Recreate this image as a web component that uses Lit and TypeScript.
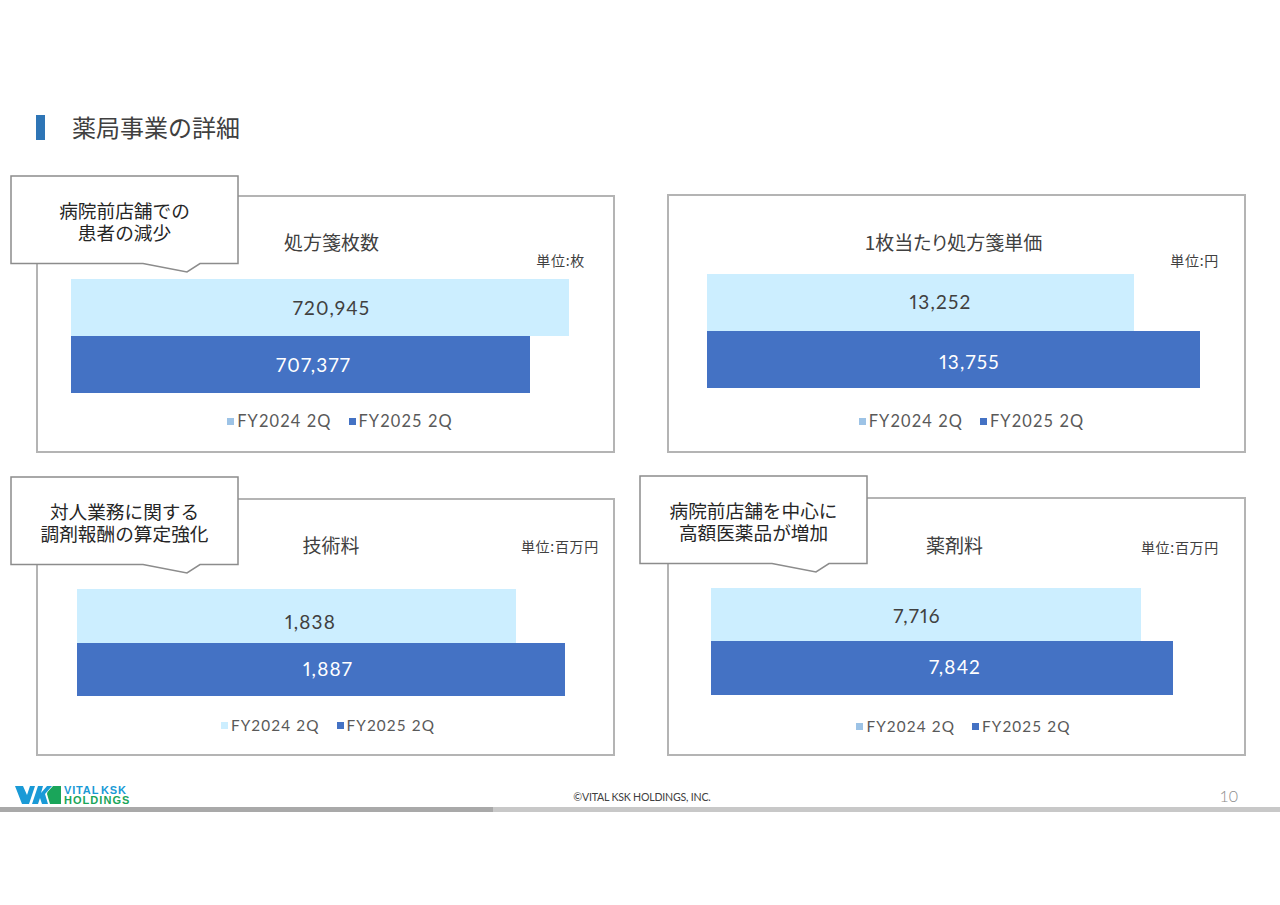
import { LitElement, html, css } from "lit";
import { customElement } from "lit/decorators.js";

interface Bar { v: string; w: number; dx: number; dy?: number; }
interface Panel {
  title: string; unit: string; left: number; h: number; top: number;
  titleDx: number; titleTop: number; unitTop: number; unitRight: number; legendDx: number; legendTop: number; legendSize: number; h2: number;
  a: Bar; b: Bar; pale?: boolean;
  call?: { l: string[]; top: number; left: number; };
  height: number;
}

const panels: Panel[] = [
  { title: "処方箋枚数", unit: "単位:枚", left: 33, top: 82, h: 57, h2: 57, titleDx: 6, titleTop: 33, unitTop: 55, unitRight: 28, legendDx: 14.5, legendTop: 18, legendSize: 16.4, height: 258,
    a: { v: "720,945", w: 498, dx: 11.5 }, b: { v: "707,377", w: 459, dx: 13 }, call: { l: ["病院前店舗での", "患者の減少"], top: -22, left: -28 } },
  { title: "1枚当たり処方箋単価", unit: "単位:円", left: 38, top: 78, h: 57, h2: 57, titleDx: -3, titleTop: 34, unitTop: 56, unitRight: 25, legendDx: 15, legendTop: 23, legendSize: 16.4, height: 259,
    a: { v: "13,252", w: 427, dx: 20, dy: -1 }, b: { v: "13,755", w: 493, dx: 16, dy: 2 } },
  { title: "技術料", unit: "単位:百万円", left: 39, top: 89, h: 54, h2: 53, titleDx: 5.5, titleTop: 33, unitTop: 38, unitRight: 14, legendDx: 2.5, legendTop: 19, legendSize: 15.3, height: 258, pale: true,
    a: { v: "1,838", w: 439, dx: 14, dy: 5 }, b: { v: "1,887", w: 488, dx: 7, dy: -1 }, call: { l: ["対人業務に関する", "調剤報酬の算定強化"], top: -24, left: -28 } },
  { title: "薬剤料", unit: "単位:百万円", left: 42, top: 89, h: 53, h2: 54, titleDx: -2, titleTop: 34, unitTop: 40, unitRight: 25, legendDx: 7, legendTop: 21, legendSize: 15.3, height: 259,
    a: { v: "7,716", w: 430, dx: -9, dy: 0.5 }, b: { v: "7,842", w: 462, dx: 13, dy: -2 }, call: { l: ["病院前店舗を中心に", "高額医薬品が増加"], top: -24, left: -30 } },
];

@customElement("app-root")
export class AppRoot extends LitElement {
  static styles = css`
    :host { display: block; width: 1280px; height: 905px; background: #fff; overflow: hidden;
      font-family: "Noto Sans CJK JP", "Noto Sans", sans-serif; color: #404040; }
    .head { display: flex; align-items: center; padding: 115px 0 0 36px; height: 25px; }
    .mark { width: 9px; height: 25px; background: #2e75b6; }
    h1 { margin: -3px 0 0 27px; font-size: 24px; font-weight: 400; line-height: 25px; color: #404040; }
    .grid { display: grid; grid-template-columns: 579px 579px; column-gap: 52px; row-gap: 44px; padding: 54px 0 0 36px; height: 589px; align-content: start; }
    .panel { position: relative; box-sizing: border-box; border: 2px solid #b4b4b4; background: #fff; align-self: end; }
    .title-row { position: absolute; left: 0; right: 0; text-align: center; font-size: 19px; line-height: 24px; color: #404040; font-feature-settings: "palt"; }
    .unit { position: absolute; font-size: 14px; line-height: 16px; color: #404040; letter-spacing: 0.7px; }
    .bars { display: flex; flex-direction: column; }
    .bar { display: flex; align-items: center; justify-content: center; font-family: "Lato", "Noto Sans", sans-serif; font-size: 19px; letter-spacing: 1.2px; font-variant-numeric: proportional-nums; }
    .bar.a { background: #cceeff; color: #404040; }
    .bar.b { background: #4472c4; color: #fff; }
    .legend { display: flex; justify-content: center; align-items: center; gap: 17px; font-family: "Lato", sans-serif; letter-spacing: 1.1px; color: #595959; line-height: 20px; }
    .legend span { display: flex; align-items: center; gap: 3px; }
    .sw { width: 7px; height: 7px; }
    .sw.a { background: #9dc3e6; }
    .sw.pale { background: #cceeff; }
    .sw.b { background: #4472c4; }
    .call { position: absolute; width: 229px; height: 90px; }
    .call svg { position: absolute; left: 0; top: 0; }
    .call div { position: absolute; left: 0; right: 0; top: 24px; text-align: center; font-size: 18.67px; line-height: 22px; color: #262626; white-space: nowrap; }
    .foot { display: grid; grid-template-columns: 477px 300px 1fr; align-items: center; height: 24px; padding: 0 42px 0 15px; }
    .logo { display: flex; align-items: center; gap: 3px; }
    .lt { display: flex; flex-direction: column; font-family: "Liberation Sans", sans-serif; font-weight: 700; font-size: 11px; line-height: 10px; white-space: nowrap; }
    .lt b { color: #1a9ad6; letter-spacing: 0.85px; word-spacing: -2px; }
    .lt i { font-style: normal; color: #1aa55a; letter-spacing: 1.05px; }
    .copy { text-align: center; font-family: "Lato", sans-serif; font-size: 10.6px; color: #404040; padding-top: 3px; white-space: nowrap; letter-spacing: -0.2px; }
    .page { text-align: right; font-family: "Lato", sans-serif; font-weight: 300; font-size: 16px; color: #8c8c8c; }
    .rule { display: flex; height: 5px; }
    .rule .l { width: 493px; background: #a9a9a9; }
    .rule .r { flex: 1; background: #c8c8c8; }
  `;

  private panel(p: Panel) {
    return html`<div class="panel" style="height:${p.height}px">
      <div class="title-row" style="top:${p.titleTop}px;left:${p.titleDx * 2}px">${p.title}</div>
      <div class="unit" style="top:${p.unitTop}px;right:${p.unitRight}px">${p.unit}</div>
      <div class="bars" style="padding:${p.top}px 0 0 ${p.left}px">
        <div class="bar a" style="width:${p.a.w}px;height:${p.h}px"><span style="margin:${(p.a.dy ?? 0) * 2}px 0 0 ${p.a.dx * 2}px">${p.a.v}</span></div>
        <div class="bar b" style="width:${p.b.w}px;height:${p.h2}px"><span style="margin:${(p.b.dy ?? 0) * 2}px 0 0 ${p.b.dx * 2}px">${p.b.v}</span></div>
      </div>
      <div class="legend" style="margin:${p.legendTop}px 0 0 ${p.legendDx * 2}px;font-size:${p.legendSize}px">
        <span><i class="sw ${p.pale ? "pale" : "a"}"></i>FY2024 2Q</span><span><i class="sw b"></i>FY2025 2Q</span>
      </div>
      ${p.call ? html`<div class="call" style="top:${p.call.top}px;left:${p.call.left}px">
        <svg width="229" height="99" viewBox="0 0 229 99"><path d="M1 1H228V88.5H190L177 97L133 88.5H1Z" fill="#fff" stroke="#8c8c8c" stroke-width="1.5"/></svg>
        <div>${p.call.l.map((t) => html`${t}<br />`)}</div>
      </div>` : ""}
    </div>`;
  }

  render() {
    return html`
      <div class="head"><div class="mark"></div><h1>薬局事業の詳細</h1></div>
      <div class="grid">${panels.map((p) => this.panel(p))}</div>
      <div class="foot">
        <div class="logo">
          <svg width="46" height="18" viewBox="0 0 46 18">
            <path d="M0 0H8L12 9L15 0H20L14 18H7Z" fill="#1a9ad6"/>
            <path d="M17 18L23 0H28L26 7L32 0H37L30 8L33 18H27L25 12L23 18Z" fill="#1a9ad6"/>
            <path d="M32.5 6L38 0H46V18H35L32 8Z" fill="#1aa55a"/>
          </svg>
          <div class="lt"><b>VITAL KSK</b><i>HOLDINGS</i></div>
        </div>
        <div class="copy">©VITAL KSK HOLDINGS, INC.</div>
        <div class="page">10</div>
      </div>
      <div class="rule"><div class="l"></div><div class="r"></div></div>
    `;
  }
}
